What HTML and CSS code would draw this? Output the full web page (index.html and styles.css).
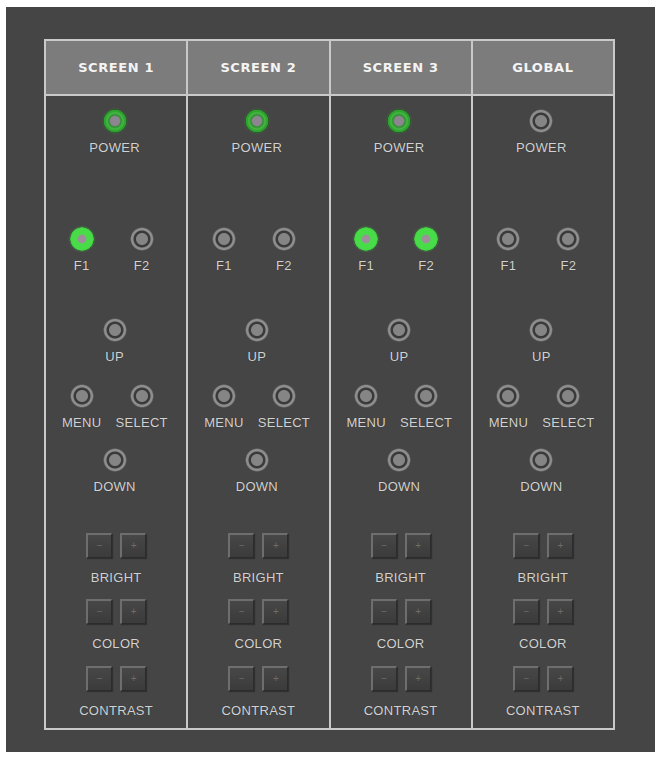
FILE: index.html
```html
<!DOCTYPE html>
<html lang="en">
<head>
    <meta charset="UTF-8">
    <meta name="viewport" content="width=device-width, initial-scale=1.0">
    <title>Screen Control</title>
    <link rel="stylesheet" href="styles.css">
</head>
<body>

<div class="panel">
    <div class="board">

        <!-- Screen 1 -->
        <div class="col">
            <div class="head">SCREEN 1</div>
            <div class="body">
                <div class="ctl power"><span class="led on-power"></span><span class="lbl">POWER</span></div>
                <div class="pair fkeys">
                    <div class="ctl"><span class="led on"></span><span class="lbl">F1</span></div>
                    <div class="ctl"><span class="led"></span><span class="lbl">F2</span></div>
                </div>
                <div class="ctl up"><span class="led"></span><span class="lbl">UP</span></div>
                <div class="pair nav">
                    <div class="ctl"><span class="led"></span><span class="lbl">MENU</span></div>
                    <div class="ctl"><span class="led"></span><span class="lbl">SELECT</span></div>
                </div>
                <div class="ctl down"><span class="led"></span><span class="lbl">DOWN</span></div>
                <div class="adj bright"><div class="keys"><span class="key">&minus;</span><span class="key">+</span></div><span class="lbl">BRIGHT</span></div>
                <div class="adj color"><div class="keys"><span class="key">&minus;</span><span class="key">+</span></div><span class="lbl">COLOR</span></div>
                <div class="adj contrast"><div class="keys"><span class="key">&minus;</span><span class="key">+</span></div><span class="lbl">CONTRAST</span></div>
            </div>
        </div>

        <!-- Screen 2 -->
        <div class="col">
            <div class="head">SCREEN 2</div>
            <div class="body">
                <div class="ctl power"><span class="led on-power"></span><span class="lbl">POWER</span></div>
                <div class="pair fkeys">
                    <div class="ctl"><span class="led"></span><span class="lbl">F1</span></div>
                    <div class="ctl"><span class="led"></span><span class="lbl">F2</span></div>
                </div>
                <div class="ctl up"><span class="led"></span><span class="lbl">UP</span></div>
                <div class="pair nav">
                    <div class="ctl"><span class="led"></span><span class="lbl">MENU</span></div>
                    <div class="ctl"><span class="led"></span><span class="lbl">SELECT</span></div>
                </div>
                <div class="ctl down"><span class="led"></span><span class="lbl">DOWN</span></div>
                <div class="adj bright"><div class="keys"><span class="key">&minus;</span><span class="key">+</span></div><span class="lbl">BRIGHT</span></div>
                <div class="adj color"><div class="keys"><span class="key">&minus;</span><span class="key">+</span></div><span class="lbl">COLOR</span></div>
                <div class="adj contrast"><div class="keys"><span class="key">&minus;</span><span class="key">+</span></div><span class="lbl">CONTRAST</span></div>
            </div>
        </div>

        <!-- Screen 3 -->
        <div class="col">
            <div class="head">SCREEN 3</div>
            <div class="body">
                <div class="ctl power"><span class="led on-power"></span><span class="lbl">POWER</span></div>
                <div class="pair fkeys">
                    <div class="ctl"><span class="led on"></span><span class="lbl">F1</span></div>
                    <div class="ctl"><span class="led on"></span><span class="lbl">F2</span></div>
                </div>
                <div class="ctl up"><span class="led"></span><span class="lbl">UP</span></div>
                <div class="pair nav">
                    <div class="ctl"><span class="led"></span><span class="lbl">MENU</span></div>
                    <div class="ctl"><span class="led"></span><span class="lbl">SELECT</span></div>
                </div>
                <div class="ctl down"><span class="led"></span><span class="lbl">DOWN</span></div>
                <div class="adj bright"><div class="keys"><span class="key">&minus;</span><span class="key">+</span></div><span class="lbl">BRIGHT</span></div>
                <div class="adj color"><div class="keys"><span class="key">&minus;</span><span class="key">+</span></div><span class="lbl">COLOR</span></div>
                <div class="adj contrast"><div class="keys"><span class="key">&minus;</span><span class="key">+</span></div><span class="lbl">CONTRAST</span></div>
            </div>
        </div>

        <!-- Global -->
        <div class="col">
            <div class="head">GLOBAL</div>
            <div class="body">
                <div class="ctl power"><span class="led"></span><span class="lbl">POWER</span></div>
                <div class="pair fkeys">
                    <div class="ctl"><span class="led"></span><span class="lbl">F1</span></div>
                    <div class="ctl"><span class="led"></span><span class="lbl">F2</span></div>
                </div>
                <div class="ctl up"><span class="led"></span><span class="lbl">UP</span></div>
                <div class="pair nav">
                    <div class="ctl"><span class="led"></span><span class="lbl">MENU</span></div>
                    <div class="ctl"><span class="led"></span><span class="lbl">SELECT</span></div>
                </div>
                <div class="ctl down"><span class="led"></span><span class="lbl">DOWN</span></div>
                <div class="adj bright"><div class="keys"><span class="key">&minus;</span><span class="key">+</span></div><span class="lbl">BRIGHT</span></div>
                <div class="adj color"><div class="keys"><span class="key">&minus;</span><span class="key">+</span></div><span class="lbl">COLOR</span></div>
                <div class="adj contrast"><div class="keys"><span class="key">&minus;</span><span class="key">+</span></div><span class="lbl">CONTRAST</span></div>
            </div>
        </div>

    </div>
</div>

</body>
</html>
```

FILE: styles.css
```css
/* Page */
body {
    margin: 0;
    background: #fff;
    font-family: 'Liberation Sans', Arial, sans-serif;
}

.panel {
    width: 611px;
    height: 713px;
    margin: 7px 0 0 6px;
    padding: 32px 0 0 38px;
    background: #454545;
}

/* Tableau des colonnes : les traits sont le fond qui passe entre les colonnes */
.board {
    display: grid;
    grid-template-columns: repeat(4, minmax(0, 1fr));
    column-gap: 2px;
    width: 567px;
    height: 687px;
    border: 2px solid #c9c9c9;
    background: #c9c9c9;
}

.col {
    display: flex;
    flex-direction: column;
    background: #454545;
}

.head {
    height: 53px;
    line-height: 53px;
    background: #7c7c7c;
    border-bottom: 2px solid #c9c9c9;
    color: #f4f4f4;
    font-family: 'DejaVu Sans', sans-serif;
    font-weight: bold;
    font-size: 13px;
    letter-spacing: 0.6px;
    text-align: center;
}

.body {
    display: flex;
    flex-direction: column;
    align-items: center;
    padding-right: 3px;
}

/* Boutons ronds */
.ctl {
    display: flex;
    flex-direction: column;
    align-items: center;
    gap: 8px;
    width: 60px;
}

.led {
    width: 24px;
    height: 24px;
    border-radius: 50%;
    background: radial-gradient(circle, #858585 0 5.5px, #3a3a3a 6.5px 8px, #8e8e8e 9px 10.5px, #5a5a5a 11.5px, #454545 12px);
}

.led.on {
    background: radial-gradient(circle, #a08c9c 0 3.5px, #49dc49 5px 10.5px, #3cc43c 11.5px, rgba(60, 200, 60, 0) 12px);
    box-shadow: 0 0 2px rgba(70, 220, 70, 0.6);
}

.led.on-power {
    background: radial-gradient(circle, #8d8590 0 4.5px, #2f8f2f 6px, #45b845 8px, #2ea02e 10px 11px, #246624 11.5px, #454545 12px);
    box-shadow: 0 0 2px rgba(60, 170, 60, 0.5);
}

.lbl {
    display: block;
    font-size: 13px;
    line-height: 14px;
    letter-spacing: 0.3px;
    color: #d2d2d2;
    white-space: nowrap;
    text-shadow: 0 0 1px rgba(0, 0, 0, 0.4);
}

.pair {
    display: flex;
    padding-right: 6px;
}

.power { margin-top: 13px; }
.fkeys { margin-top: 72px; }
.up { margin-top: 45px; }
.nav { margin-top: 20px; }
.down { margin-top: 18px; }

/* Boutons carrés */
.adj {
    display: flex;
    flex-direction: column;
    align-items: center;
    gap: 13px;
    margin-left: 3px;
}

.keys {
    display: flex;
    gap: 8px;
}

.key {
    width: 23px;
    height: 22px;
    line-height: 22px;
    text-align: center;
    font-size: 10px;
    color: #6c6c6c;
    background: linear-gradient(#474747, #3b3b3b);
    border-style: solid;
    border-width: 2px 1px 1px 2px;
    border-color: #6e6e6e #2c2c2c #2c2c2c #6e6e6e;
    box-shadow: 1px 1px 1px rgba(0, 0, 0, 0.3);
}

.bright { margin-top: 39px; }
.color { margin-top: 14px; }
.contrast { margin-top: 15px; }
```
